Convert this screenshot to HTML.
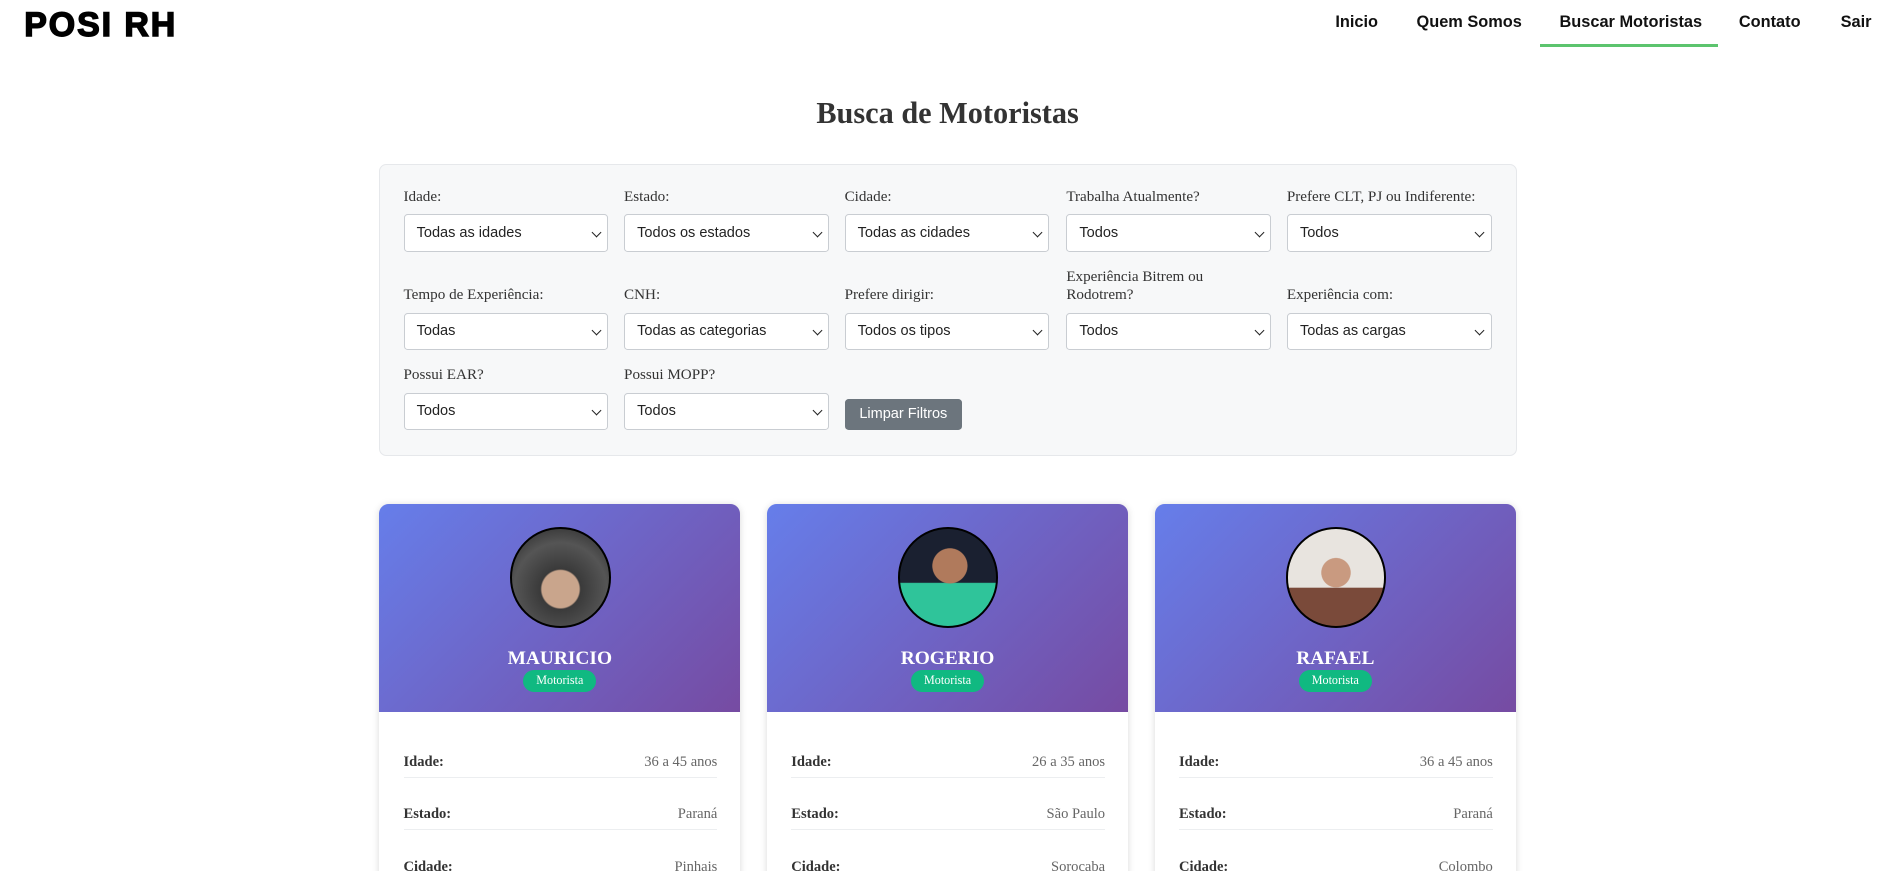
<!DOCTYPE html>
<html><head><meta charset="utf-8"><style>
*{box-sizing:border-box;margin:0;padding:0}
html,body{width:1900px;height:871px;overflow:hidden;background:#fff}
#z{zoom:1.21173;width:1568px;height:719px;position:relative;font-family:"Liberation Serif",serif;color:#333}
.a{position:absolute}
.logo{left:20px;top:5px;font:bold 28px "Liberation Sans",sans-serif;color:#000;letter-spacing:1.6px;-webkit-text-stroke:1.2px #000}
.nav{top:11px;font:bold 13.5px "Liberation Sans",sans-serif;color:#111}
.ul{left:1271px;top:36px;width:147px;height:3px;background:#5cc46e}
h1{position:absolute;left:0;width:1564px;text-align:center;top:79px;font:bold 25px "Liberation Serif",serif;color:#333}
.box{left:313px;top:135px;width:939px;height:241px;background:#f7f8f9;border:1px solid #e6e8eb;border-radius:6px}
.lb{font-size:12.5px;color:#333;line-height:15px}
.sel{width:169px;height:31px;background:#fff;border:1px solid #c9cdd2;border-radius:3px;font:12px "Liberation Sans",sans-serif;color:#222;padding:8px 10px;line-height:14px}
.sel:after{content:"";position:absolute;right:6px;top:11px;width:5px;height:5px;border-right:1.5px solid #222;border-bottom:1.5px solid #222;transform:rotate(45deg)}
.btn{left:697px;top:329px;width:97px;height:26px;background:#6c757d;border-radius:3px;color:#fff;font:12px "Liberation Sans",sans-serif;text-align:center;line-height:26px}
.card{top:416px;width:298px;height:320px;background:#fff;border-radius:8px;box-shadow:0 1px 6px rgba(0,0,0,.15);overflow:hidden}
.hd{position:absolute;left:0;top:0;width:298px;height:172px;background:linear-gradient(135deg,#667eea,#764ba2)}
.av{position:absolute;left:108px;top:19px;width:83px;height:83px;border-radius:50%;border:2px solid #000}
.nm{position:absolute;left:0;width:298px;top:119px;text-align:center;color:#fff;font:bold 16px "Liberation Serif",serif}
.bd{position:absolute;left:119px;top:137px;width:60px;height:18px;border-radius:9px;background:#10b981;color:#fff;font-size:10px;text-align:center;line-height:18px}
.row{position:absolute;left:20px;width:259px;height:20px;font-size:12px;border-bottom:1px solid #eceef0}
.row b{color:#333}.row span{position:absolute;right:0;color:#666}
</style></head><body><div id="z">
<div class="a logo">POSI RH</div>
<div class="a nav" style="left:1102px">Inicio</div>
<div class="a nav" style="left:1169px">Quem Somos</div>
<div class="a nav" style="left:1287px">Buscar Motoristas</div>
<div class="a nav" style="left:1435px">Contato</div>
<div class="a nav" style="left:1519px">Sair</div>
<div class="a ul"></div>
<h1>Busca de Motoristas</h1>
<div class="a box"></div>
<div class="a lb" style="left:333px;top:155px">Idade:</div>
<div class="a lb" style="left:515px;top:155px">Estado:</div>
<div class="a lb" style="left:697px;top:155px">Cidade:</div>
<div class="a lb" style="left:880px;top:155px">Trabalha Atualmente?</div>
<div class="a lb" style="left:1062px;top:155px">Prefere CLT, PJ ou Indiferente:</div>
<div class="a sel" style="left:333px;top:177px">Todas as idades</div>
<div class="a sel" style="left:515px;top:177px">Todos os estados</div>
<div class="a sel" style="left:697px;top:177px">Todas as cidades</div>
<div class="a sel" style="left:880px;top:177px">Todos</div>
<div class="a sel" style="left:1062px;top:177px">Todos</div>
<div class="a lb" style="left:333px;top:236px">Tempo de Experiência:</div>
<div class="a lb" style="left:515px;top:236px">CNH:</div>
<div class="a lb" style="left:697px;top:236px">Prefere dirigir:</div>
<div class="a lb" style="left:880px;top:221px">Experiência Bitrem ou<br>Rodotrem?</div>
<div class="a lb" style="left:1062px;top:236px">Experiência com:</div>
<div class="a sel" style="left:333px;top:258px">Todas</div>
<div class="a sel" style="left:515px;top:258px">Todas as categorias</div>
<div class="a sel" style="left:697px;top:258px">Todos os tipos</div>
<div class="a sel" style="left:880px;top:258px">Todos</div>
<div class="a sel" style="left:1062px;top:258px">Todas as cargas</div>
<div class="a lb" style="left:333px;top:302px">Possui EAR?</div>
<div class="a lb" style="left:515px;top:302px">Possui MOPP?</div>
<div class="a sel" style="left:333px;top:324px">Todos</div>
<div class="a sel" style="left:515px;top:324px">Todos</div>
<div class="a btn">Limpar Filtros</div>

<div class="a card" style="left:313px"><div class="hd"></div>
<div class="av" style="background:radial-gradient(circle at 50% 62%,#c9a58c 0 24%,#3a3a3a 26%,#555 60%,#222)"></div>
<div class="nm">MAURICIO</div><div class="bd">Motorista</div>
<div class="row" style="top:206px"><b>Idade:</b><span>36 a 45 anos</span></div>
<div class="row" style="top:249px"><b>Estado:</b><span>Paraná</span></div>
<div class="row" style="top:293px"><b>Cidade:</b><span>Pinhais</span></div></div>

<div class="a card" style="left:633px"><div class="hd"></div>
<div class="av" style="background:radial-gradient(circle at 52% 38%,#b07a5c 0 22%,transparent 23%),linear-gradient(#1a2030 0 55%,#2fc49a 56%)"></div>
<div class="nm">ROGERIO</div><div class="bd">Motorista</div>
<div class="row" style="top:206px"><b>Idade:</b><span>26 a 35 anos</span></div>
<div class="row" style="top:249px"><b>Estado:</b><span>São Paulo</span></div>
<div class="row" style="top:293px"><b>Cidade:</b><span>Sorocaba</span></div></div>

<div class="a card" style="left:953px"><div class="hd"></div>
<div class="av" style="background:radial-gradient(circle at 50% 45%,#c99a80 0 20%,transparent 21%),linear-gradient(#e8e4df 0 60%,#7a4a3a 61%)"></div>
<div class="nm">RAFAEL</div><div class="bd">Motorista</div>
<div class="row" style="top:206px"><b>Idade:</b><span>36 a 45 anos</span></div>
<div class="row" style="top:249px"><b>Estado:</b><span>Paraná</span></div>
<div class="row" style="top:293px"><b>Cidade:</b><span>Colombo</span></div></div>
</div></body></html>
